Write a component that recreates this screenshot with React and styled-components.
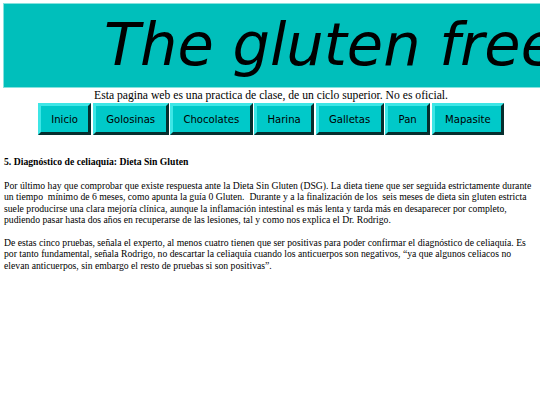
import React from "react";
import styled, { createGlobalStyle } from "styled-components";

const Global = createGlobalStyle`
  html, body { margin: 0; padding: 0; background: #ffffff; overflow: hidden; }
  body { font-family: "Liberation Serif", "Times New Roman", serif; color: #000; }
`;

const Page = styled.div`
  width: 540px;
  overflow: hidden;
`;

const Banner = styled.header`
  margin: 3px 0 0 3px;
  width: 700px;
  height: 85px;
  box-sizing: border-box;
  border: 1px solid #86e2de;
  background: #00bfbb;
  padding: 11px 0 0 100px;
`;

const Title = styled.h1`
  margin: 0;
  font-family: "DejaVu Sans", sans-serif;
  font-style: italic;
  font-weight: normal;
  font-size: 59px;
  line-height: 59px;
  white-space: nowrap;
  color: #000;
`;

const Center = styled.div`
  width: 542px;
`;

const Notice = styled.p`
  margin: 0;
  text-align: center;
  font-size: 11.65px;
  line-height: 15px;
`;

const Nav = styled.nav`
  display: flex;
  justify-content: center;
  gap: 1.5px;
`;

const NavButton = styled.a`
  display: flex;
  align-items: center;
  height: 32px;
  box-sizing: border-box;
  padding: 0 10.4px;
  background: #00c9c9;
  border-style: solid;
  border-width: 3px;
  border-color: #3ee6e6 #062e2e #062e2e #3ee6e6;
  font-family: "DejaVu Sans", sans-serif;
  font-size: 10.1px;
  color: #000;
  text-decoration: none;
`;

const Article = styled.article`
  padding: 0 0 0 4px;
  width: 532px;
  margin-top: 21px;
`;

const Heading = styled.h4`
  margin: 0 0 12.5px;
  font-size: 9.7px;
  line-height: 11.4px;
  font-weight: bold;
`;

const Para = styled.p`
  margin: 0 0 11.5px;
  font-size: 9.7px;
  line-height: 11.4px;
`;

const links = ["Inicio", "Golosinas", "Chocolates", "Harina", "Galletas", "Pan", "Mapasite"];

export default function App() {
  return (
    <Page>
      <Global />
      <Banner>
        <Title>The gluten free world</Title>
      </Banner>
      <Center>
        <Notice>Esta pagina web es una practica de clase, de un ciclo superior. No es oficial.</Notice>
        <Nav>
          {links.map((l) => (
            <NavButton key={l} href="#">{l}</NavButton>
          ))}
        </Nav>
      </Center>
      <Article>
        <Heading>5. Diagnóstico de celiaquía: Dieta Sin Gluten</Heading>
        <Para>
          Por último hay que comprobar que existe respuesta ante la Dieta Sin Gluten (DSG). La dieta tiene que ser seguida estrictamente durante un tiempo {"\u00a0"}mínimo de 6 meses, como apunta la guía 0 Gluten. {"\u00a0"}Durante y a la finalización de los {"\u00a0"}seis meses de dieta sin gluten estricta suele producirse una clara mejoría clínica, aunque la inflamación intestinal es más lenta y tarda más en desaparecer por completo, pudiendo pasar hasta dos años en recuperarse de las lesiones, tal y como nos explica el Dr. Rodrigo.
        </Para>
        <Para>
          De estas cinco pruebas, señala el experto, al menos cuatro tienen que ser positivas para poder confirmar el diagnóstico de celiaquía. Es por tanto fundamental, señala Rodrigo, no descartar la celiaquía cuando los anticuerpos son negativos, “ya que algunos celiacos no elevan anticuerpos, sin embargo el resto de pruebas si son positivas”.
        </Para>
      </Article>
    </Page>
  );
}
